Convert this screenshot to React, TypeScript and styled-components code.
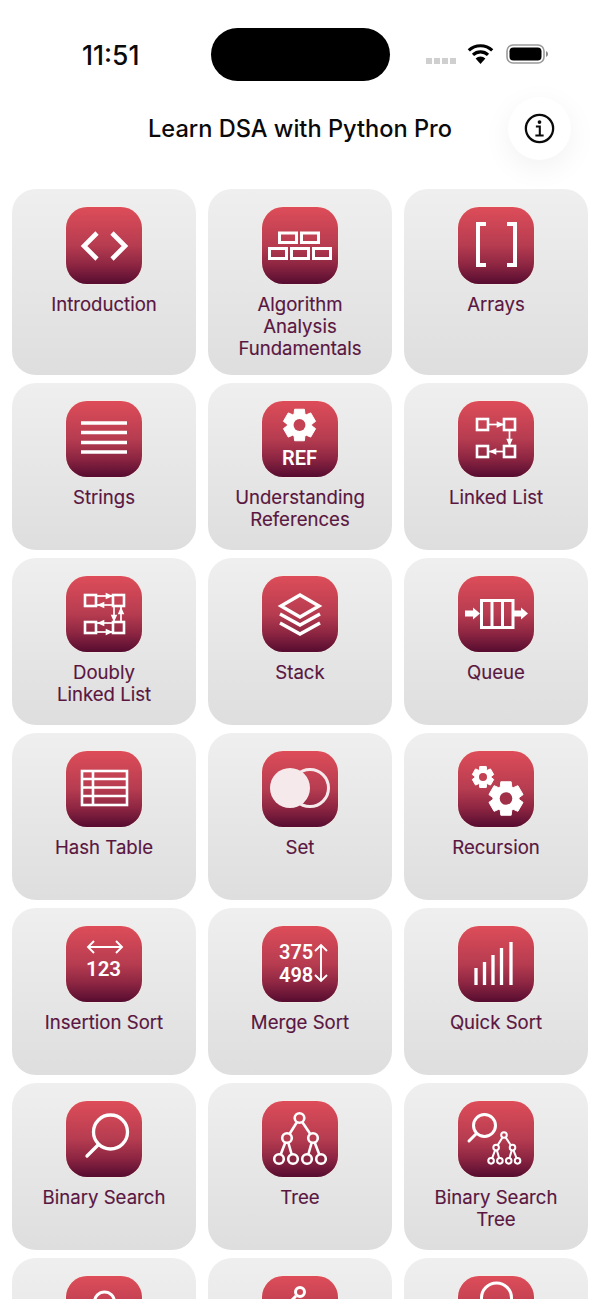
import React from "react";
import styled, { createGlobalStyle } from "styled-components";

const GlobalStyle = createGlobalStyle`
  html, body {
    margin: 0;
    padding: 0;
    height: 1299px;
    overflow: hidden;
    background: #fff;
    font-family: "Inter", "Liberation Sans", sans-serif;
  }
`;

const Page = styled.div`
  width: 600px;
  height: 1299px;
  overflow: hidden;
  display: flex;
  flex-direction: column;
`;

const StatusBar = styled.div`
  height: 96px;
  flex-shrink: 0;
  box-sizing: border-box;
  padding: 28px 0 0 82px;
  display: flex;
  align-items: flex-start;
`;

const Clock = styled.div`
  width: 129px;
  margin-top: 13px;
  font-size: 26.5px;
  line-height: 28px;
  font-weight: 500;
  color: #0a0a0a;
`;

const Island = styled.div`
  width: 179px;
  height: 53px;
  border-radius: 27px;
  background: #000;
`;

const StatusIcons = styled.div`
  margin-left: 36px;
  margin-top: 16px;
  display: flex;
  align-items: flex-start;
`;

const SignalDots = styled.div`
  display: flex;
  gap: 2px;
  margin-top: 14px;
  margin-right: 11px;
`;

const SignalDot = styled.span`
  width: 6px;
  height: 6px;
  background: #cfcfcf;
`;

const WifiIcon = styled.svg`
  margin-right: 12px;
`;

const Header = styled.div`
  position: relative;
  height: 93px;
  flex-shrink: 0;
  display: flex;
  justify-content: center;
  padding-top: 18px;
  box-sizing: border-box;
`;

const Title = styled.h1`
  margin: 0;
  font-size: 23.6px;
  line-height: 30px;
  font-weight: 500;
  color: #0a0a0a;
`;

const InfoButton = styled.div`
  position: absolute;
  left: 508px;
  top: 1px;
  width: 63px;
  height: 63px;
  border-radius: 50%;
  background: #fff;
  box-shadow: 0 8px 30px rgba(0, 0, 0, 0.06);
  display: flex;
  align-items: center;
  justify-content: center;
`;

const Grid = styled.div`
  display: grid;
  grid-template-columns: repeat(3, 184px);
  column-gap: 12px;
  row-gap: 8px;
  padding: 0 12px;
`;

const Card = styled.div`
  box-sizing: border-box;
  min-height: 167px;
  padding: 18px 4px 16px;
  border-radius: 24px;
  background: linear-gradient(180deg, #efefef 0%, #dedede 100%);
  display: flex;
  flex-direction: column;
  align-items: center;
  gap: 9px;
`;

const IconTile = styled.div`
  box-sizing: border-box;
  width: 76.5px;
  height: 76.5px;
  padding: 0.75px;
  flex-shrink: 0;
  border-radius: 21px;
  box-shadow: 0 0 0 0.5px rgba(255, 240, 225, 0.9);
  background: linear-gradient(180deg, #de4d59 0%, #b63c50 50%, #8e2642 75%, #560c30 100%);
`;

const Label = styled.div`
  font-size: 18.6px;
  line-height: 22px;
  font-weight: 400;
  text-align: center;
  color: #5a1640;
  -webkit-text-stroke: 0.15px #5a1640;
  white-space: pre-line;
`;

const GlyphText = styled.text`
  font-family: "Roboto", "Inter", sans-serif;
  font-weight: 600;
  fill: #fff;
`;

type GlyphProps = { children: React.ReactNode };

// icons are drawn on the tile, 75 units across inside its padding
const Glyph = ({ children }: GlyphProps) => (
  <svg width="75" height="75" viewBox="0 0 75 75" fill="none" stroke="#fff" strokeWidth="2.5" style={{ display: "block" }}>
    {children}
  </svg>
);

// same colour as the tile at height y, for hollow shapes that sit over lines
const tileColor = (y: number) => {
  const stops: [number, number[]][] = [
    [0, [222, 77, 89]],
    [37.5, [182, 60, 80]],
    [56, [142, 38, 66]],
    [75, [86, 12, 48]],
  ];
  for (let i = 1; i < stops.length; i++) {
    if (y <= stops[i][0]) {
      const [y0, c0] = stops[i - 1];
      const [y1, c1] = stops[i];
      const t = (y - y0) / (y1 - y0);
      const c = c0.map((v, j) => Math.round(v + (c1[j] - v) * t));
      return `rgb(${c.join(",")})`;
    }
  }
  return "rgb(86,12,48)";
};

const gearPath = (cx: number, cy: number, r: number) => {
  const teeth = 6;
  const inner = r * 0.74;
  let d = "";
  for (let i = 0; i < teeth; i++) {
    const a = (i * Math.PI * 2) / teeth - Math.PI / 2;
    const pts = [
      [a - 0.46, inner],
      [a - 0.3, r],
      [a + 0.3, r],
      [a + 0.46, inner],
    ];
    pts.forEach(([ang, rad], j) => {
      const x = (cx + Math.cos(ang) * rad).toFixed(2);
      const y = (cy + Math.sin(ang) * rad).toFixed(2);
      d += `${i === 0 && j === 0 ? "M" : "L"}${x} ${y} `;
    });
  }
  return d + "Z";
};

const Gear = ({ cx, cy, r }: { cx: number; cy: number; r: number }) => (
  <>
    <path d={gearPath(cx, cy, r - 0.5)} fill="#fff" stroke="#fff" strokeWidth="1" strokeLinejoin="round" />
    <circle cx={cx} cy={cy} r={r * 0.35} fill={tileColor(cy)} stroke="none" />
  </>
);

const Arrow = ({ x1, y1, x2, y2 }: { x1: number; y1: number; x2: number; y2: number }) => {
  const a = Math.atan2(y2 - y1, x2 - x1);
  const p = (ang: number, r: number) => `${x2 + Math.cos(ang) * r} ${y2 + Math.sin(ang) * r}`;
  return (
    <>
      <line x1={x1} y1={y1} x2={x2} y2={y2} strokeWidth="1.7" />
      <polygon points={`${p(a, 0)} ${p(a + Math.PI - 0.42, 8)} ${p(a + Math.PI + 0.42, 8)}`} fill="#fff" stroke="none" />
    </>
  );
};

const Square = ({ x, y }: { x: number; y: number }) => (
  <rect x={x} y={y} width={11} height={11} strokeWidth="2.6" />
);

const TreeGlyph = ({ dx = 0, dy = 0, k = 1, w = 2.6, r = 4.8 }: { dx?: number; dy?: number; k?: number; w?: number; r?: number }) => {
  const pt = (x: number, y: number) => [dx + x * k, dy + y * k];
  const root = pt(36.5, 17);
  const mids = [pt(24, 37), pt(50, 37)];
  const leaves = [pt(16, 58), pt(30, 58), pt(44, 58), pt(58, 58)];
  const links = [
    [root, mids[0]],
    [root, mids[1]],
    [mids[0], leaves[0]],
    [mids[0], leaves[1]],
    [mids[1], leaves[2]],
    [mids[1], leaves[3]],
  ];
  return (
    <g strokeWidth={w}>
      {links.map(([a, b], i) => (
        <line key={i} x1={a[0]} y1={a[1]} x2={b[0]} y2={b[1]} />
      ))}
      {[root, ...mids, ...leaves].map(([x, y], i) => (
        <circle key={i} cx={x} cy={y} r={r} fill={tileColor(y)} />
      ))}
    </g>
  );
};

const icons: Record<string, React.ReactNode> = {
  code: <path d="M30 25 L17 38 L30 51 M45 25 L58 38 L45 51" strokeWidth="4.6" />,
  bricks: (
    <g strokeWidth="3">
      <rect x="16.5" y="25" width="17" height="9.5" />
      <rect x="38.5" y="25" width="17" height="9.5" />
      <rect x="6.5" y="40.5" width="17" height="10" />
      <rect x="28.5" y="40.5" width="17" height="10" />
      <rect x="50.5" y="40.5" width="17" height="10" />
    </g>
  ),
  brackets: <path d="M27 16 H19 V57 H27 M48 16 H56 V57 H48" strokeWidth="4" />,
  lines: <path d="M14 22 H60 M14 31.5 H60 M14 41.5 H60 M14 51 H60" strokeWidth="3.6" />,
  ref: (
    <>
      <Gear cx={36.5} cy={24} r={17} />
      <GlyphText x="36.5" y="64" fontSize="20" textAnchor="middle" stroke="none">
        REF
      </GlyphText>
    </>
  ),
  linked: (
    <>
      <Square x={18} y={18} />
      <Square x={45} y={18} />
      <Square x={18} y={45} />
      <Square x={45} y={45} />
      <Arrow x1={30} y1={23.5} x2={45} y2={23.5} />
      <Arrow x1={50.5} y1={30} x2={50.5} y2={45} />
      <Arrow x1={45} y1={50.5} x2={30} y2={50.5} />
    </>
  ),
  doubly: (
    <>
      <Square x={18} y={19} />
      <Square x={46} y={19} />
      <Square x={18} y={46} />
      <Square x={46} y={46} />
      <Arrow x1={30} y1={20} x2={46} y2={20} />
      <Arrow x1={46} y1={29} x2={30} y2={29} />
      <Arrow x1={47} y1={31} x2={47} y2={46} />
      <Arrow x1={54} y1={46} x2={54} y2={31} />
      <Arrow x1={46} y1={47} x2={30} y2={47} />
      <Arrow x1={30} y1={56} x2={46} y2={56} />
    </>
  ),
  stack: (
    <g strokeWidth="3.4">
      <path d="M37 19 L56 30 L37 41 L18 30 Z" />
      <path d="M17 38 L37 49 L57 38" />
      <path d="M17 47 L37 58 L57 47" />
    </g>
  ),
  queue: (
    <>
      <rect x="22.5" y="24.5" width="31.5" height="27" strokeWidth="3" />
      <path d="M33 24.5 V51.5 M43.5 24.5 V51.5" strokeWidth="3" />
      <path d="M6 34.5 H14 V31.5 L21 37.5 L14 43.5 V40.5 H6 Z M55 34.5 H62 V31.5 L69 37.5 L62 43.5 V40.5 H55 Z" fill="#fff" stroke="none" />
    </>
  ),
  table: (
    <g strokeWidth="2.6">
      <rect x="15" y="20" width="45" height="34" />
      <path d="M15 28 H60 M15 36.5 H60 M15 45 H60 M26 20 V54" />
    </g>
  ),
  set: (
    <>
      <circle cx="47" cy="37" r="18.5" strokeWidth="3" stroke="#f6e9ec" />
      <circle cx="27" cy="37" r="20" fill="#f6e9ec" stroke="none" />
    </>
  ),
  gears: (
    <>
      <Gear cx={24} cy={26} r={11.5} />
      <Gear cx={47} cy={47.5} r={18} />
    </>
  ),
  insertion: (
    <>
      <path d="M21 21 H55 M27 15 L21 21 L27 27 M49 15 L55 21 L49 27" strokeWidth="1.9" />
      <GlyphText x="36.5" y="50" fontSize="20.5" textAnchor="middle" stroke="none">
        123
      </GlyphText>
    </>
  ),
  merge: (
    <>
      <GlyphText x="16" y="33" fontSize="20" stroke="none">
        375
      </GlyphText>
      <GlyphText x="16" y="56" fontSize="20" stroke="none">
        498
      </GlyphText>
      <path d="M58 19 V55 M52 25 L58 19 L64 25 M52 49 L58 55 L64 49" strokeWidth="1.9" />
    </>
  ),
  bars: <path d="M17 42 V59 M25.5 36 V59 M34 29 V59 M42.5 22 V59 M52 16 V59" strokeWidth="3.3" />,
  search: (
    <>
      <circle cx="43.5" cy="31" r="17" strokeWidth="3.3" />
      <path d="M31 44 L20 55" strokeWidth="3.3" strokeLinecap="round" />
    </>
  ),
  tree: <TreeGlyph />,
  bst: (
    <>
      <circle cx="25.5" cy="24.5" r="11" strokeWidth="3" />
      <path d="M17 33 L10 40" strokeWidth="3" strokeLinecap="round" />
      <TreeGlyph dx={22} dy={23.3} k={0.63} w={2} r={2.8} />
    </>
  ),
  ringLeft: <circle cx="37.5" cy="26" r="10" strokeWidth="3" />,
  ringNode: (
    <>
      <line x1="33" y1="20" x2="24" y2="29" strokeWidth="3" />
      <circle cx="37" cy="16" r="4.5" strokeWidth="3" fill={tileColor(16)} />
    </>
  ),
  ringWide: <circle cx="37.5" cy="22" r="15" strokeWidth="3" />,
};

const items: { label?: string; icon: string }[] = [
  { label: "Introduction", icon: "code" },
  { label: "Algorithm\nAnalysis\nFundamentals", icon: "bricks" },
  { label: "Arrays", icon: "brackets" },
  { label: "Strings", icon: "lines" },
  { label: "Understanding\nReferences", icon: "ref" },
  { label: "Linked List", icon: "linked" },
  { label: "Doubly\nLinked List", icon: "doubly" },
  { label: "Stack", icon: "stack" },
  { label: "Queue", icon: "queue" },
  { label: "Hash Table", icon: "table" },
  { label: "Set", icon: "set" },
  { label: "Recursion", icon: "gears" },
  { label: "Insertion Sort", icon: "insertion" },
  { label: "Merge Sort", icon: "merge" },
  { label: "Quick Sort", icon: "bars" },
  { label: "Binary Search", icon: "search" },
  { label: "Tree", icon: "tree" },
  { label: "Binary Search\nTree", icon: "bst" },
  { icon: "ringLeft" },
  { icon: "ringNode" },
  { icon: "ringWide" },
];

export default function App() {
  return (
    <Page>
      <GlobalStyle />
      <StatusBar>
        <Clock>11:51</Clock>
        <Island />
        <StatusIcons>
          <SignalDots>
            <SignalDot />
            <SignalDot />
            <SignalDot />
            <SignalDot />
          </SignalDots>
          <WifiIcon width="27" height="20" viewBox="0 0 27 20">
            <path d="M13.5 20 L8.6 14.6 A7 7 0 0 1 18.4 14.6 Z" fill="#000" />
            <path d="M6 10.8 A11 11 0 0 1 21 10.8" fill="none" stroke="#000" strokeWidth="3.2" />
            <path d="M1.8 6.4 A17 17 0 0 1 25.2 6.4" fill="none" stroke="#000" strokeWidth="3.2" />
          </WifiIcon>
          <svg width="44" height="20" viewBox="0 0 44 20">
            <rect x="1" y="1" width="37" height="18" rx="6" fill="none" stroke="#9a9a9a" strokeWidth="1.6" />
            <rect x="3.5" y="3.5" width="32" height="13" rx="3.8" fill="#000" />
            <path d="M40 7 A3.2 3.2 0 0 1 40 13 Z" fill="#8a8a8a" />
          </svg>
        </StatusIcons>
      </StatusBar>
      <Header>
        <Title>Learn DSA with Python Pro</Title>
        <InfoButton>
          <svg width="31" height="31" viewBox="0 0 30 30" fill="none" stroke="#0a0a0a">
            <circle cx="15" cy="15" r="13.2" strokeWidth="2.2" />
            <circle cx="15" cy="8.8" r="1.8" fill="#0a0a0a" stroke="none" />
            <path d="M11.5 13 H15.3 V21.5 M11 21.8 H19" strokeWidth="2" />
          </svg>
        </InfoButton>
      </Header>
      <Grid>
        {items.map((item) => (
          <Card key={item.icon}>
            <IconTile>
              <Glyph>{icons[item.icon]}</Glyph>
            </IconTile>
            {item.label && <Label>{item.label}</Label>}
          </Card>
        ))}
      </Grid>
    </Page>
  );
}
